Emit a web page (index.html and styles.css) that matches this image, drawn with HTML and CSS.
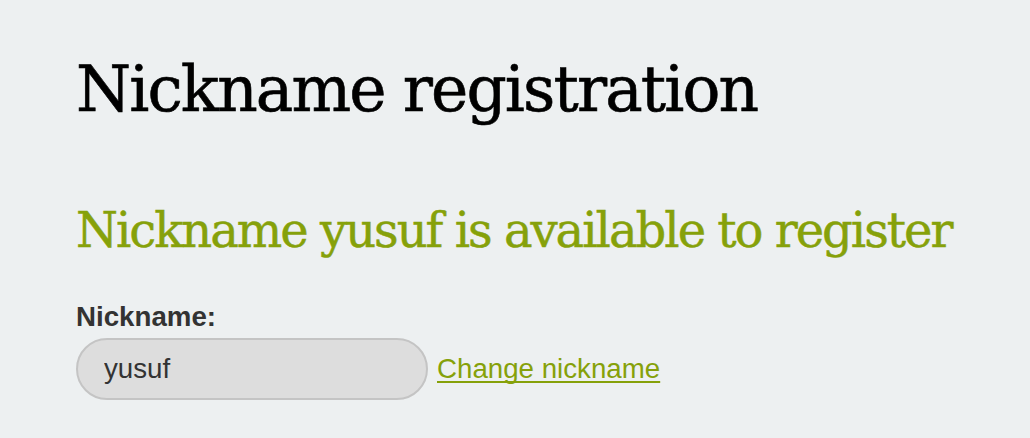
FILE: index.html
```html
<!DOCTYPE html>
<html lang="en">
<head>
<meta charset="utf-8">
<title>Nickname registration</title>
<link rel="stylesheet" href="styles.css">
</head>
<body>
<main class="page">
  <h1 class="title">Nickname registration</h1>
  <h2 class="status">Nickname yusuf is available to register</h2>
  <form class="form">
    <label class="label" for="nick">Nickname:</label>
    <div class="row">
      <input class="input" id="nick" type="text" value="yusuf" readonly>
      <a class="link" href="#">Change nickname</a>
    </div>
  </form>
</main>
</body>
</html>
```
FILE: styles.css
```css
html, body {
  margin: 0;
  padding: 0;
  background: #edf0f1;
}
.page {
  padding: 52px 0 0 76px;
}
.title {
  margin: 0;
  font-family: "DejaVu Serif", serif;
  font-weight: normal;
  font-size: 63px;
  line-height: 76px;
  color: #000;
  letter-spacing: -1.9px;
  -webkit-text-stroke: 0.6px #000;
}
.status {
  margin: 74px 0 0 0;
  font-family: "DejaVu Serif", serif;
  font-weight: normal;
  font-size: 48px;
  line-height: 56px;
  color: #86a10a;
  letter-spacing: -2px;
  -webkit-text-stroke: 0.5px #86a10a;
}
.form {
  margin-top: 43px;
  font-family: "Liberation Sans", Arial, sans-serif;
  font-size: 27.7px;
}
.label {
  display: block;
  font-weight: bold;
  color: #333;
  line-height: 32px;
}
.row {
  display: flex;
  align-items: center;
  gap: 9px;
  margin-top: 5px;
}
.input {
  box-sizing: border-box;
  width: 352px;
  height: 62px;
  padding: 0 26px;
  border: 2px solid #c4c4c4;
  border-radius: 31px;
  background: #dddddd;
  font-family: "Liberation Sans", Arial, sans-serif;
  font-size: 27.7px;
  color: #333;
  outline: none;
}
.link {
  color: #86a10a;
  text-decoration: underline;
  text-decoration-thickness: 2px;
  text-decoration-skip-ink: none;
  text-underline-offset: 3px;
}
```
